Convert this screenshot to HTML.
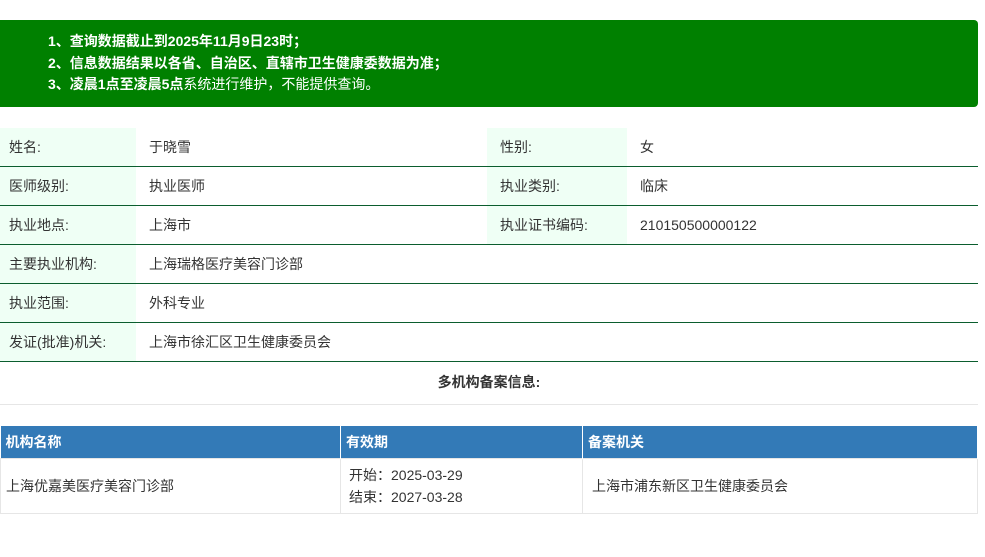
<!DOCTYPE html>
<html><head><meta charset="utf-8"><style>
*{margin:0;padding:0;box-sizing:border-box}
body{width:985px;height:557px;background:#fff;font-family:"Liberation Sans","Noto Sans CJK SC",sans-serif;font-size:14px;color:#333;position:relative;overflow:hidden}
.notice{position:absolute;left:0;top:20px;width:978px;height:87px;background:#008000;border-radius:0 4px 4px 0;color:#fff;font-weight:bold;padding:11px 0 0 48px;line-height:21.5px}
.row{position:absolute;left:0;width:978px;height:39px;border-bottom:1px solid #0b5d2e}
.c{position:absolute;top:0;height:38px;line-height:38px}
.lab{background:#effff5;padding-left:9px}
.val{padding-left:13px}
.t2{position:absolute;left:0;top:426px;width:978px;border-collapse:collapse}
.t2 th{background:#337ab7;color:#fff;text-align:left;height:32px;padding-left:5px;font-weight:bold;border-right:1px solid #fff}
.t2 td{height:55px;padding-left:5px;border:1px solid #e6e6e6;line-height:22px}
</style></head><body>
<div class="notice">1、查询数据截止到2025年11月9日23时；<br>2、信息数据结果以各省、自治区、直辖市卫生健康委数据为准；<br>3、凌晨1点至凌晨5点<span style="font-weight:normal">系统进行维护，不能提供查询。</span></div>

<div class="row" style="top:128px"><div class="c lab" style="left:0;width:136px">姓名:</div><div class="c val" style="left:136px">于晓雪</div><div class="c lab" style="left:487px;width:140px;padding-left:13px">性别:</div><div class="c val" style="left:627px">女</div></div>
<div class="row" style="top:167px"><div class="c lab" style="left:0;width:136px">医师级别:</div><div class="c val" style="left:136px">执业医师</div><div class="c lab" style="left:487px;width:140px;padding-left:13px">执业类别:</div><div class="c val" style="left:627px">临床</div></div>
<div class="row" style="top:206px"><div class="c lab" style="left:0;width:136px">执业地点:</div><div class="c val" style="left:136px">上海市</div><div class="c lab" style="left:487px;width:140px;padding-left:13px">执业证书编码:</div><div class="c val" style="left:627px">210150500000122</div></div>
<div class="row" style="top:245px"><div class="c lab" style="left:0;width:136px">主要执业机构:</div><div class="c val" style="left:136px">上海瑞格医疗美容门诊部</div></div>
<div class="row" style="top:284px"><div class="c lab" style="left:0;width:136px">执业范围:</div><div class="c val" style="left:136px">外科专业</div></div>
<div class="row" style="top:323px"><div class="c lab" style="left:0;width:136px">发证(批准)机关:</div><div class="c val" style="left:136px">上海市徐汇区卫生健康委员会</div></div>

<div style="position:absolute;left:0;top:362px;width:978px;height:43px;line-height:41px;text-align:center;font-weight:bold;border-bottom:1px solid #e6e6e6">多机构备案信息:</div>

<table class="t2"><tr><th style="width:340px">机构名称</th><th style="width:242px">有效期</th><th>备案机关</th></tr>
<tr><td>上海优嘉美医疗美容门诊部</td><td style="padding-left:8px">开始：2025-03-29<br>结束：2027-03-28</td><td style="padding-left:9px">上海市浦东新区卫生健康委员会</td></tr></table>
</body></html>
